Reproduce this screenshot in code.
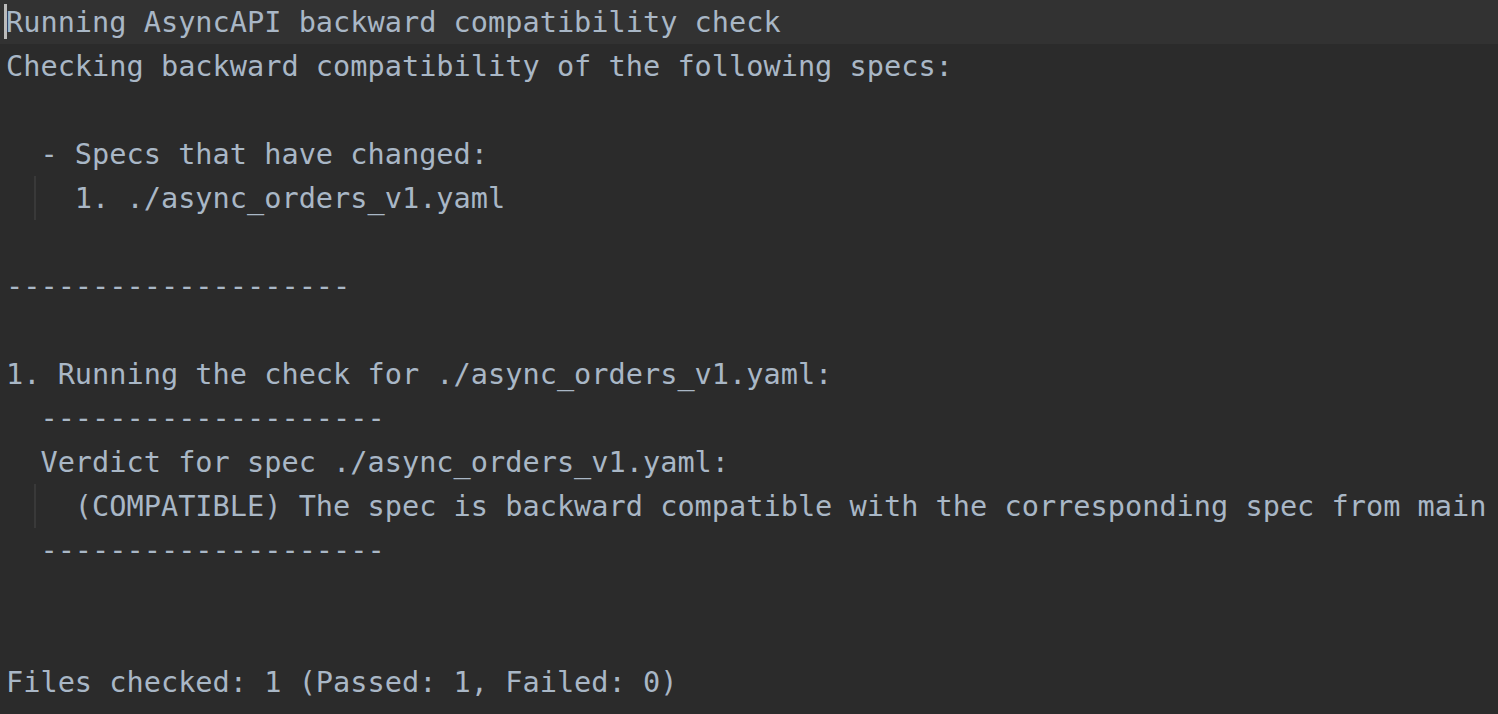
import React from 'react';

type Line = { text: string; guide?: boolean; current?: boolean };

const LINES: Line[] = [
  { text: 'Running AsyncAPI backward compatibility check', current: true },
  { text: 'Checking backward compatibility of the following specs:' },
  { text: '' },
  { text: '  - Specs that have changed:' },
  { text: '    1. ./async_orders_v1.yaml', guide: true },
  { text: '' },
  { text: '--------------------' },
  { text: '' },
  { text: '1. Running the check for ./async_orders_v1.yaml:' },
  { text: '  --------------------' },
  { text: '  Verdict for spec ./async_orders_v1.yaml:' },
  { text: '    (COMPATIBLE) The spec is backward compatible with the corresponding spec from main', guide: true },
  { text: '  --------------------' },
  { text: '' },
  { text: '' },
  { text: 'Files checked: 1 (Passed: 1, Failed: 0)' },
];

export default function App() {
  return (
    <div className="min-h-screen w-full bg-[#2b2b2b] overflow-hidden text-[#a9b7c6] font-['DejaVu_Sans_Mono',monospace] text-[28.6px]">
      {LINES.map((line, i) => (
        <div
          key={i}
          className={`relative h-[44px] leading-[44px] pl-[6px] whitespace-pre ${line.current ? 'bg-[#323232]' : ''}`}
        >
          {line.current && (
            <span className="absolute left-[4px] top-[4px] h-[35px] w-[3px] bg-[#bbbbbb]" />
          )}
          {line.guide && (
            <span className="absolute left-[34px] top-[0px] h-[44px] w-[2px] bg-[#393939]" />
          )}
          {line.text || ' '}
        </div>
      ))}
    </div>
  );
}
